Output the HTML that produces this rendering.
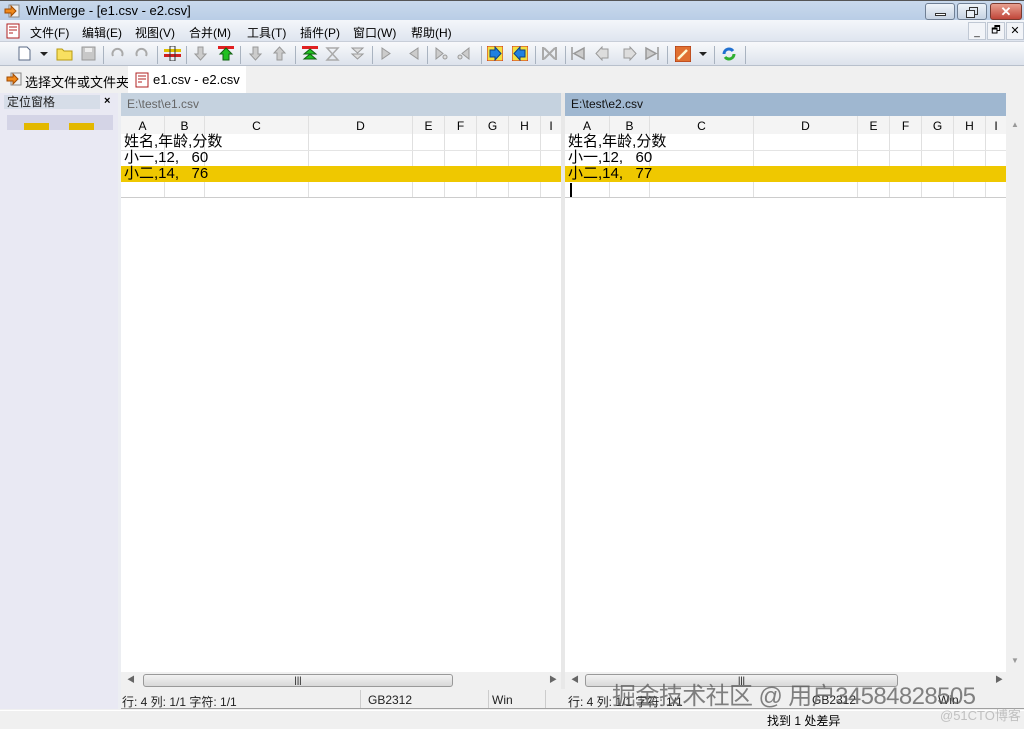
<!DOCTYPE html>
<html><head><meta charset="utf-8"><style>
*{margin:0;padding:0;box-sizing:border-box}
body{width:1024px;height:729px;overflow:hidden;background:#f0f0f0;font-family:"Liberation Sans","Noto Sans CJK SC",sans-serif;font-size:12px;color:#000;position:relative}
.a{position:absolute}
.title{left:0;top:0;width:1024px;height:20px;background:linear-gradient(#c9d9ec,#b9cde6);border-top:1px solid #555}
.menu{left:0;top:20px;width:1024px;height:21px;background:linear-gradient(#f4f6fa,#dfe5ef)}
.tb{left:0;top:41px;width:1024px;height:25px;background:linear-gradient(#f8f9fb,#dde3ec);border-top:1px solid #c8ced8;border-bottom:1px solid #b8c0cc}
.sep{position:absolute;top:4px;width:1px;height:18px;background:#a9b3c0}
.ic{position:absolute;top:4px;width:15px;height:15px}
.tabs{left:0;top:66px;width:1024px;height:27px;background:#f0f0f0}
.side{left:0;top:93px;width:118px;height:616px;background:#e9e9f3}
.pane{background:#fff}
.hdr{font-size:12px;height:23px;line-height:23px;padding-left:6px}
.cols{height:18px;background:#f4f4f4;font-family:"Liberation Sans",sans-serif;font-size:14px}
.cell{position:absolute;top:0;text-align:center;border-right:1px solid #e0e0e0;height:82px;line-height:20px}
.row{position:absolute;left:0;height:16px;font-size:15px;line-height:16px;padding-left:3px;white-space:pre;font-family:"Liberation Sans","Noto Sans CJK SC",sans-serif}
.st{font-size:12px;top:693px;color:#222}
</style></head><body>
<div class="a title">
 <svg class="a" style="left:4px;top:2px" width="16" height="16"><rect x="5" y="2" width="10" height="12" fill="#eee" stroke="#888"/><path d="M1 6h6V3l5 5-5 5v-3H1z" fill="#f08a1c" stroke="#a04a00"/></svg>
 <div class="a" style="left:26px;top:2px;font-size:13px">WinMerge - [e1.csv - e2.csv]</div>
 <div class="a" style="left:925px;top:2px;width:30px;height:17px;border:1px solid #6f7f94;border-radius:3px;background:linear-gradient(#eef3f9,#c6d3e3)"><div class="a" style="left:9px;top:9px;width:11px;height:3px;border:1px solid #333;background:#fff"></div></div>
 <div class="a" style="left:957px;top:2px;width:30px;height:17px;border:1px solid #6f7f94;border-radius:3px;background:linear-gradient(#eef3f9,#c6d3e3)"><div class="a" style="left:11px;top:3px;width:9px;height:8px;border:1px solid #333"></div><div class="a" style="left:8px;top:6px;width:9px;height:8px;border:1px solid #333;background:#eaf0f7"></div></div>
 <div class="a" style="left:990px;top:2px;width:32px;height:17px;border:1px solid #7a3a30;border-radius:3px;background:linear-gradient(#e8a090,#c0463a);color:#fff;text-align:center;font-weight:bold;font-size:13px;line-height:15px">✕</div>
</div>
<div class="a menu">
 <svg class="a" style="left:6px;top:3px" width="14" height="16"><rect x="1" y="1" width="12" height="14" fill="#fff" stroke="#b02020"/><path d="M3 4h8M3 7h8M3 10h4" stroke="#b02020"/></svg>
 <div class="a" style="left:30px;top:4px">文件(F)</div>
 <div class="a" style="left:82px;top:4px">编辑(E)</div>
 <div class="a" style="left:135px;top:4px">视图(V)</div>
 <div class="a" style="left:189px;top:4px">合并(M)</div>
 <div class="a" style="left:247px;top:4px">工具(T)</div>
 <div class="a" style="left:300px;top:4px">插件(P)</div>
 <div class="a" style="left:353px;top:4px">窗口(W)</div>
 <div class="a" style="left:411px;top:4px">帮助(H)</div>
 <div class="a" style="left:968px;top:2px;width:18px;height:18px;border:1px solid #c0c8d4;background:#f2f4f8;text-align:center;font-size:10px;line-height:20px">_</div>
 <div class="a" style="left:987px;top:2px;width:18px;height:18px;border:1px solid #c0c8d4;background:#f2f4f8;text-align:center;font-size:10px;line-height:16px">🗗</div>
 <div class="a" style="left:1006px;top:2px;width:18px;height:18px;border:1px solid #c0c8d4;background:#f2f4f8;text-align:center;font-size:11px;line-height:16px">✕</div>
</div>
<div class="a tb">
 <svg class="ic" style="left:17px" viewBox="0 0 15 15"><path d="M2 1h8l3 3v10H2z" fill="#fff" stroke="#5a6a86"/></svg>
 <div class="a" style="left:40px;top:10px;border:4px solid transparent;border-top:4px solid #222"></div>
 <svg class="ic" style="left:56px;width:17px" viewBox="0 0 17 15"><path d="M1 3h5l2 2h8v9H1z" fill="#f8e060" stroke="#b89a10"/></svg>
 <svg class="ic" style="left:81px" viewBox="0 0 15 15"><rect x="1" y="1" width="13" height="13" fill="#c8c8c8" stroke="#999"/><rect x="4" y="2" width="7" height="4" fill="#eee"/></svg>
 <div class="sep" style="left:103px"></div>
 <svg class="ic" style="left:110px" viewBox="0 0 15 15"><path d="M3 10a5 5 0 1 1 9 0" fill="none" stroke="#aaa" stroke-width="2"/></svg>
 <svg class="ic" style="left:134px" viewBox="0 0 15 15"><path d="M3 10a5 5 0 1 1 9 0" fill="none" stroke="#aaa" stroke-width="2"/></svg>
 <div class="sep" style="left:157px"></div>
 <svg class="ic" style="left:164px;width:17px" viewBox="0 0 17 15"><rect x="0" y="3" width="17" height="3" fill="#e0c000"/><rect x="0" y="8" width="17" height="3" fill="#d02020"/><rect x="6" y="0" width="5" height="15" fill="none" stroke="#333"/></svg>
 <div class="sep" style="left:186px"></div>
 <svg class="ic" style="left:193px" viewBox="0 0 15 15"><path d="M5 1h5v7h3l-5.5 6L2 8h3z" fill="#ccc" stroke="#999"/></svg>
 <svg class="ic" style="left:218px;width:16px" viewBox="0 0 16 15"><rect x="0" y="0" width="16" height="3" fill="#e02020"/><path d="M8 2l6 6h-3v6H5V8H2z" fill="#20c020" stroke="#106010"/></svg>
 <div class="sep" style="left:240px"></div>
 <svg class="ic" style="left:248px" viewBox="0 0 15 15"><path d="M5 1h5v7h3l-5.5 6L2 8h3z" fill="#ccc" stroke="#999"/></svg>
 <svg class="ic" style="left:272px" viewBox="0 0 15 15"><path d="M7.5 1L13 7h-3v7H5V7H2z" fill="#ccc" stroke="#999"/></svg>
 <div class="sep" style="left:295px"></div>
 <svg class="ic" style="left:302px;width:16px" viewBox="0 0 16 15"><rect width="16" height="3" fill="#e02020"/><path d="M8 3l6 5H2zM8 8l6 5H2z" fill="#20c020" stroke="#106010"/></svg>
 <svg class="ic" style="left:325px" viewBox="0 0 15 15"><path d="M2 2h11L7.5 8 13 14H2l5.5-6z" fill="none" stroke="#aaa" stroke-width="1.5"/></svg>
 <svg class="ic" style="left:350px" viewBox="0 0 15 15"><path d="M2 2h11L7.5 7zM2 8h11L7.5 13z" fill="#ddd" stroke="#999"/></svg>
 <div class="sep" style="left:372px"></div>
 <svg class="ic" style="left:378px" viewBox="0 0 15 15"><path d="M4 2l8 5.5L4 13z" fill="#ccc" stroke="#999"/></svg>
 <svg class="ic" style="left:407px" viewBox="0 0 15 15"><path d="M11 2L3 7.5 11 13z" fill="#ccc" stroke="#999"/></svg>
 <div class="sep" style="left:427px"></div>
 <svg class="ic" style="left:433px" viewBox="0 0 15 15"><path d="M3 2l7 5.5L3 13z" fill="#ccc" stroke="#999"/><circle cx="12" cy="11" r="2" fill="#ddd" stroke="#999"/></svg>
 <svg class="ic" style="left:457px" viewBox="0 0 15 15"><path d="M12 2L5 7.5 12 13z" fill="#ccc" stroke="#999"/><circle cx="3" cy="11" r="2" fill="#ddd" stroke="#999"/></svg>
 <div class="sep" style="left:481px"></div>
 <svg class="ic" style="left:487px;width:16px" viewBox="0 0 16 15"><rect x="0" y="0" width="16" height="15" fill="#f2e040" stroke="#d02020"/><path d="M3 4h5V1l6 6.5-6 6.5v-3H3z" fill="#2080e0" stroke="#104080"/></svg>
 <svg class="ic" style="left:512px;width:16px" viewBox="0 0 16 15"><rect x="0" y="0" width="16" height="15" fill="#f2e040" stroke="#d02020"/><path d="M13 4H8V1L2 7.5 8 14v-3h5z" fill="#2080e0" stroke="#104080"/></svg>
 <div class="sep" style="left:535px"></div>
 <svg class="ic" style="left:542px" viewBox="0 0 15 15"><path d="M1 1v13M14 1v13M2 2l11 11M13 2L2 13" stroke="#aaa" stroke-width="2"/></svg>
 <div class="sep" style="left:565px"></div>
 <svg class="ic" style="left:570px" viewBox="0 0 15 15"><path d="M2 1v13M14 2L4 7.5 14 13z" fill="#ccc" stroke="#999" stroke-width="1.5"/></svg>
 <svg class="ic" style="left:595px" viewBox="0 0 15 15"><path d="M13 3H7V1L1 7.5 7 14v-2h6z" fill="#ddd" stroke="#999"/></svg>
 <svg class="ic" style="left:622px" viewBox="0 0 15 15"><path d="M2 3h6V1l6 6.5L8 14v-2H2z" fill="#ddd" stroke="#999"/></svg>
 <svg class="ic" style="left:645px" viewBox="0 0 15 15"><path d="M13 1v13M1 2l10 5.5L1 13z" fill="#ccc" stroke="#999" stroke-width="1.5"/></svg>
 <div class="sep" style="left:667px"></div>
 <svg class="ic" style="left:675px;width:16px;height:16px" viewBox="0 0 16 16"><rect width="16" height="16" fill="#e07030" stroke="#a03010"/><path d="M3 13l9-9" stroke="#fff8d0" stroke-width="2.5"/></svg>
 <div class="a" style="left:699px;top:10px;border:4px solid transparent;border-top:4px solid #222"></div>
 <div class="sep" style="left:714px"></div>
 <svg class="ic" style="left:721px;width:16px;height:16px" viewBox="0 0 16 16"><path d="M3 8a5 5 0 0 1 9-3" fill="none" stroke="#2070d0" stroke-width="3"/><path d="M13 8a5 5 0 0 1-9 3" fill="none" stroke="#30b030" stroke-width="3"/></svg>
 <div class="sep" style="left:745px"></div>
</div>
<div class="a tabs">
 <svg class="a" style="left:6px;top:5px" width="16" height="16"><rect x="5" y="2" width="10" height="12" fill="#eee" stroke="#888"/><path d="M1 6h6V3l5 5-5 5v-3H1z" fill="#f08a1c" stroke="#a04a00"/></svg>
 <div class="a" style="left:25px;top:6px;font-size:13px">选择文件或文件夹</div>
 <div class="a" style="left:128px;top:0;width:118px;height:27px;background:#fff"></div>
 <svg class="a" style="left:135px;top:6px" width="14" height="16"><rect x="1" y="1" width="12" height="14" fill="#fff" stroke="#b02020"/><path d="M3 4h8M3 7h8M3 10h4" stroke="#b02020"/></svg>
 <div class="a" style="left:153px;top:6px;font-size:13px">e1.csv - e2.csv</div>
</div>
<div class="a side">
 <div class="a" style="left:4px;top:2px;width:96px;height:14px;background:#d6dde8;font-size:12px;line-height:14px;padding-left:3px;color:#222">定位窗格</div>
 <div class="a" style="left:104px;top:2px;font-weight:bold;font-size:11px">×</div>
 <div class="a" style="left:7px;top:22px;width:106px;height:15px;background:#d4d4e6"></div>
 <div class="a" style="left:24px;top:30px;width:25px;height:7px;background:#e3b800"></div>
 <div class="a" style="left:69px;top:30px;width:25px;height:7px;background:#e3b800"></div>
</div>
<div class="a" style="left:118px;top:93px;width:3px;height:616px;background:#eceef2"></div>
<div class="a" style="left:561px;top:93px;width:4px;height:600px;background:#e8e8e8"></div>

<div class="a pane" style="left:121px;top:93px;width:440px;height:579px">
 <div class="hdr" style="background:#c5d2df;color:#666">E:\test\e1.csv</div>
 <div class="a cols" style="left:0;top:23px;width:440px"></div>
 <div class="a" style="left:0;top:23px;width:440px;height:82px">
  <div class="cell" style="left:0;width:44px">A</div><div class="cell" style="left:44px;width:40px">B</div><div class="cell" style="left:84px;width:104px">C</div><div class="cell" style="left:188px;width:104px">D</div><div class="cell" style="left:292px;width:32px">E</div><div class="cell" style="left:324px;width:32px">F</div><div class="cell" style="left:356px;width:32px">G</div><div class="cell" style="left:388px;width:32px">H</div><div class="cell" style="left:420px;width:20px;border:0">I</div>
 </div>
 <div class="a" style="left:0;top:57px;width:440px;height:1px;background:#e4e4e4"></div>
 <div class="a" style="left:0;top:73px;width:440px;height:16px;background:#efc800"></div>
 <div class="a" style="left:0;top:104px;width:440px;height:1px;background:#ccc"></div>
 <div class="row" style="top:41px">姓名,年龄,分数</div>
 <div class="row" style="top:57px">小一,12,   60</div>
 <div class="row" style="top:73px">小二,14,   76</div>
</div>
<div class="a pane" style="left:565px;top:93px;width:441px;height:579px">
 <div class="hdr" style="background:#9fb7d0;color:#111">E:\test\e2.csv</div>
 <div class="a cols" style="left:0;top:23px;width:441px"></div>
 <div class="a" style="left:0;top:23px;width:441px;height:82px">
  <div class="cell" style="left:0;width:45px">A</div><div class="cell" style="left:45px;width:40px">B</div><div class="cell" style="left:85px;width:104px">C</div><div class="cell" style="left:189px;width:104px">D</div><div class="cell" style="left:293px;width:32px">E</div><div class="cell" style="left:325px;width:32px">F</div><div class="cell" style="left:357px;width:32px">G</div><div class="cell" style="left:389px;width:32px">H</div><div class="cell" style="left:421px;width:20px;border:0">I</div>
 </div>
 <div class="a" style="left:0;top:57px;width:441px;height:1px;background:#e4e4e4"></div>
 <div class="a" style="left:0;top:73px;width:441px;height:16px;background:#efc800"></div>
 <div class="a" style="left:0;top:104px;width:441px;height:1px;background:#ccc"></div>
 <div class="row" style="top:41px">姓名,年龄,分数</div>
 <div class="row" style="top:57px">小一,12,   60</div>
 <div class="row" style="top:73px">小二,14,   77</div>
 <div class="a" style="left:5px;top:90px;width:2px;height:14px;background:#000"></div>
</div>
<div class="a" style="left:1006px;top:116px;width:18px;height:556px;background:#f0f0f0"><div class="a" style="left:5px;top:4px;font-size:8px;color:#999">▲</div><div class="a" style="left:5px;top:540px;font-size:8px;color:#999">▼</div></div>
<div class="a" style="left:121px;top:672px;width:440px;height:17px;background:#f0f0f0">
 <div class="a" style="left:6px;top:2px;font-size:8px;color:#666">◀</div>
 <div class="a" style="left:22px;top:2px;width:310px;height:13px;border:1px solid #999;border-radius:3px;background:linear-gradient(#f2f2f2,#d8d8d8);text-align:center;font-size:9px;line-height:11px">|||</div>
 <div class="a" style="left:428px;top:2px;font-size:8px;color:#666">▶</div>
</div>
<div class="a" style="left:565px;top:672px;width:441px;height:17px;background:#f0f0f0">
 <div class="a" style="left:6px;top:2px;font-size:8px;color:#666">◀</div>
 <div class="a" style="left:20px;top:2px;width:313px;height:13px;border:1px solid #999;border-radius:3px;background:linear-gradient(#f2f2f2,#d8d8d8);text-align:center;font-size:9px;line-height:11px">|||</div>
 <div class="a" style="left:430px;top:2px;font-size:8px;color:#666">▶</div>
</div>
<div class="a" style="left:121px;top:689px;width:903px;height:20px;background:#f0f0f0;border-bottom:1px solid #a0a0a0"></div>
<div class="a st" style="left:122px">行: 4  列: 1/1  字符: 1/1</div>
<div class="a st" style="left:368px">GB2312</div>
<div class="a" style="left:360px;top:690px;width:1px;height:18px;background:#ccc"></div>
<div class="a" style="left:488px;top:690px;width:1px;height:18px;background:#ccc"></div>
<div class="a st" style="left:492px">Win</div>
<div class="a" style="left:545px;top:690px;width:1px;height:18px;background:#ccc"></div>
<div class="a st" style="left:568px">行: 4  列: 1/1  字符: 1/1</div>
<div class="a st" style="left:812px">GB2312</div>
<div class="a st" style="left:938px">Win</div>
<div class="a" style="left:0;top:710px;width:1024px;height:19px;background:#f0f0f0;border-top:1px solid #fff"></div>
<div class="a" style="left:767px;top:712px;font-size:12px">找到 1 处差异</div>
<div class="a" style="left:612px;top:676px;font-size:24px;color:rgba(90,90,90,0.75);letter-spacing:-0.6px">掘金技术社区 @ 用户34584828505</div>
<div class="a" style="left:940px;top:705px;font-size:13px;color:rgba(180,180,180,0.8)">@51CTO博客</div>
</body></html>
